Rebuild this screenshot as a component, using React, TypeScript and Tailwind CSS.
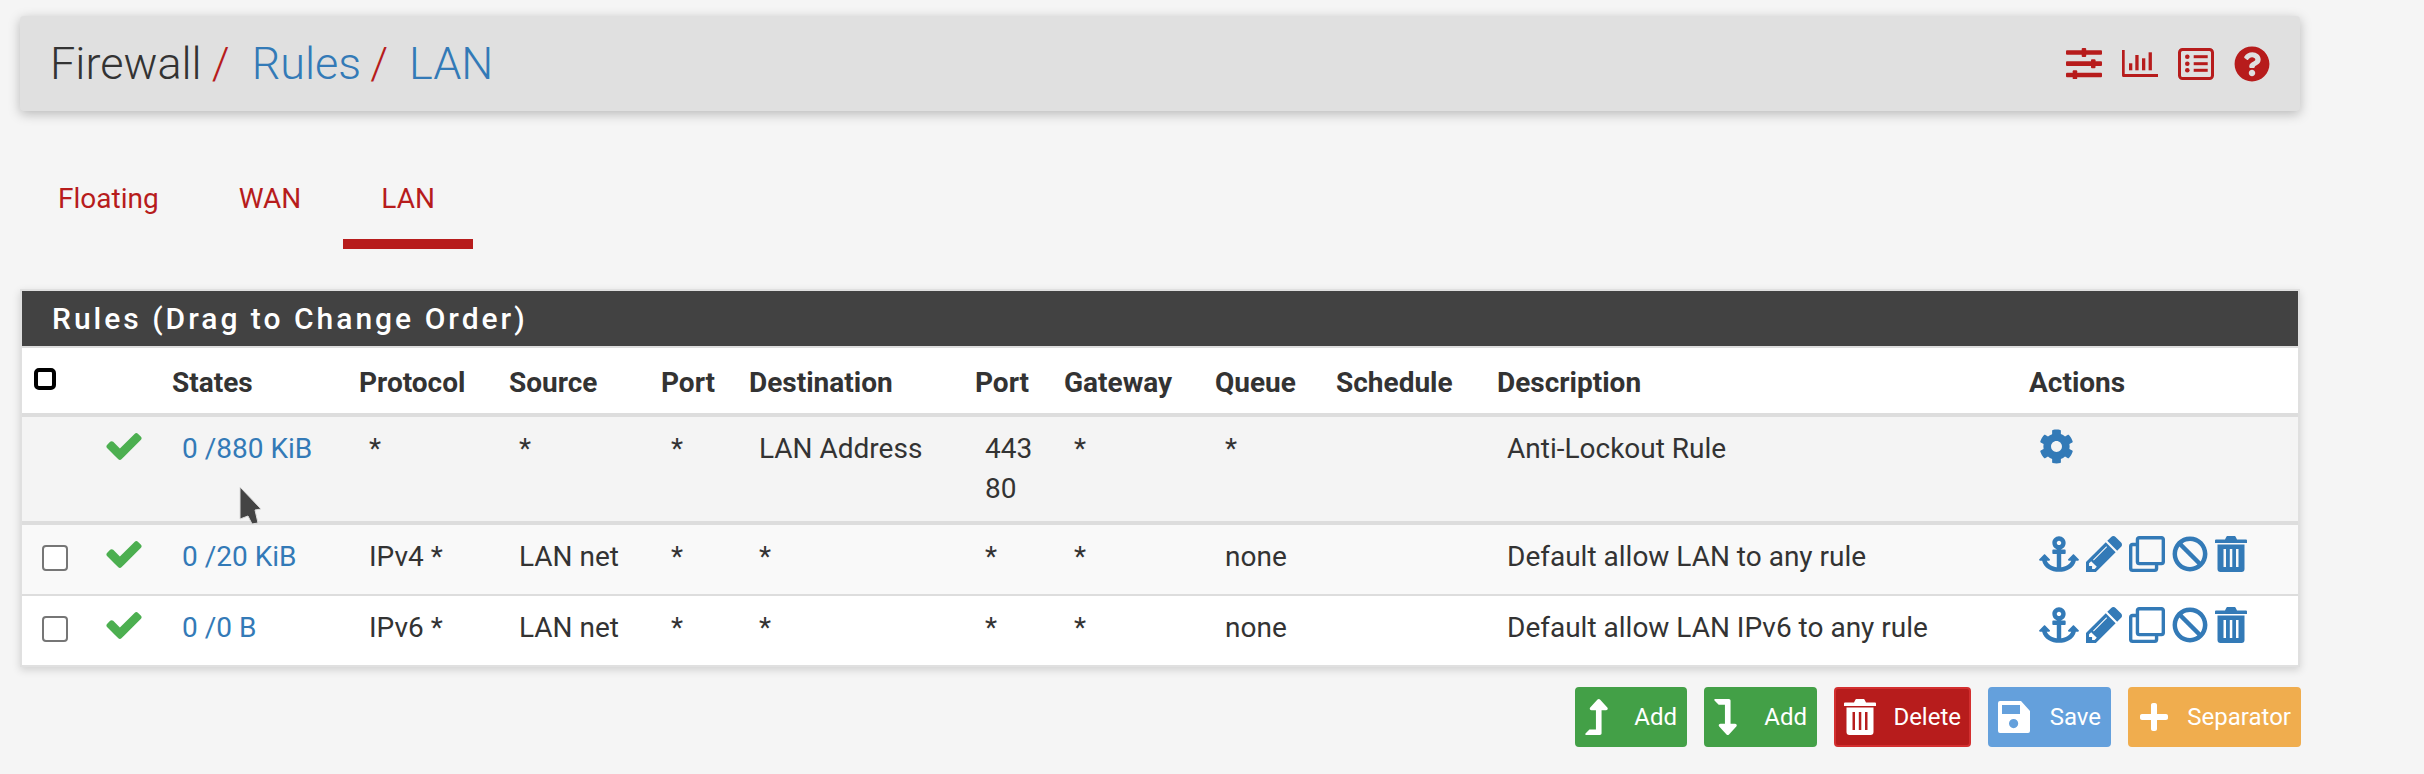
import React from "react";
import {
  FaAnchor,
  FaBan,
  FaCog,
  FaLevelDownAlt,
  FaLevelUpAlt,
  FaPlus,
  FaQuestionCircle,
  FaRegClone,
} from "react-icons/fa";

const columns = [
  { label: "", width: "w-[70px]" },
  { label: "", width: "w-[80px]" },
  { label: "States", width: "w-[187px]" },
  { label: "Protocol", width: "w-[150px]" },
  { label: "Source", width: "w-[152px]" },
  { label: "Port", width: "w-[88px]" },
  { label: "Destination", width: "w-[226px]" },
  { label: "Port", width: "w-[89px]" },
  { label: "Gateway", width: "w-[151px]" },
  { label: "Queue", width: "w-[121px]" },
  { label: "Schedule", width: "w-[161px]" },
  { label: "Description", width: "w-[532px]" },
  { label: "Actions", width: "w-[269px]" },
];

const rules = [
  { states: "0 /880 KiB", proto: "*", source: "*", dest: "LAN Address", port: ["443", "80"], queue: "*", desc: "Anti-Lockout Rule", locked: true },
  { states: "0 /20 KiB", proto: "IPv4 *", source: "LAN net", dest: "*", port: ["*"], queue: "none", desc: "Default allow LAN to any rule", locked: false },
  { states: "0 /0 B", proto: "IPv6 *", source: "LAN net", dest: "*", port: ["*"], queue: "none", desc: "Default allow LAN IPv6 to any rule", locked: false },
];

function SlidersIcon() {
  return (
    <svg viewBox="0 0 36 31" className="h-[31px] w-[36px] fill-current">
      <rect y="2.300" width="36" height="4.500" rx="1" />
      <rect x="15.700" width="4.500" height="9" rx="1" />
      <rect y="13.300" width="36" height="4.700" rx="1" />
      <rect x="25" y="11.300" width="4.500" height="9" rx="1" />
      <rect y="24.700" width="36" height="4.600" rx="1" />
      <rect x="6.700" y="22.300" width="4.500" height="9" rx="1" />
    </svg>
  );
}

function ChartIcon() {
  return (
    <svg viewBox="0 0 36 28" className="h-[28px] w-[36px] fill-current">
      <path d="M0 0h2.700v24H36v3H1.500A1.500 1.500 0 0 1 0 25.500z" />
      <rect x="7" y="13.300" width="3.300" height="7" />
      <rect x="13.300" y="5" width="3.300" height="15.300" />
      <rect x="20" y="8.300" width="3.300" height="12" />
      <rect x="26.600" y="2.300" width="3.300" height="18" />
    </svg>
  );
}

function ListIcon() {
  return (
    <svg viewBox="0 0 36 32" className="h-[32px] w-[36px] fill-current">
      <rect x="1.500" y="1.500" width="33" height="29" rx="3" fill="none" stroke="currentColor" strokeWidth="3" />
      <circle cx="9.300" cy="8.700" r="2.300" />
      <circle cx="9.300" cy="15.700" r="2.300" />
      <circle cx="9.300" cy="22.300" r="2.300" />
      <rect x="15.700" y="7.200" width="14" height="3" />
      <rect x="15.700" y="14.200" width="14" height="3" />
      <rect x="15.700" y="20.800" width="14" height="3" />
    </svg>
  );
}

function CheckIcon() {
  return (
    <svg viewBox="121 334 1550 1188" className="h-[27px] w-[36px] fill-current">
      <path d="M1671 566q0 40-28 68l-724 724-136 136q-28 28-68 28t-68-28l-136-136-362-362q-28-28-28-68t28-68l136-136q28-28 68-28t68 28l294 295 656-657q28-28 68-28t68 28l136 136q28 28 28 68z" />
    </svg>
  );
}

function PencilIcon() {
  return (
    <svg viewBox="128 149 1515 1515" className="h-[36px] w-[36px] fill-current">
      <path d="M491 1536l91-91-235-235-91 91v107h128v128h107zm523-928q0-22-22-22-10 0-17 7l-542 542q-7 7-7 17 0 22 22 22 10 0 17-7l542-542q7-7 7-17zm-54-192l416 416-832 832h-416v-416zm683 96q0 53-37 90l-166 166-416-416 166-165q36-38 90-38 53 0 91 38l235 234q37 39 37 91z" />
    </svg>
  );
}

function TrashIcon({ className }: { className: string }) {
  return (
    <svg viewBox="0 0 32 36" className={`fill-current ${className}`}>
      <path
        fillRule="evenodd"
        d="M10 3.500 11.500.500A1 1 0 0 1 12.400 0h7.200a1 1 0 0 1 .9.500L22 3.500h9a1 1 0 0 1 1 1V7H0V4.500a1 1 0 0 1 1-1zM2.500 8.500h27V33a3 3 0 0 1-3 3h-21a3 3 0 0 1-3-3zM8.500 13v18h2.500V13zM14.800 13v18h2.500V13zM21 13v18h2.500V13z"
      />
    </svg>
  );
}

function SaveIcon() {
  return (
    <svg viewBox="0 0 32 32" className="h-[32px] w-[32px] fill-current">
      <path
        fillRule="evenodd"
        d="M2 0H23l9 10V30a2 2 0 0 1-2 2H2a2 2 0 0 1-2-2V2a2 2 0 0 1 2-2zM4 4v9H22V4zM20.200 22.600a4.600 4.600 0 1 0-9.200 0 4.600 4.600 0 1 0 9.200 0z"
      />
    </svg>
  );
}

function ActionBtn({ color, icon, label, className }: { color: string; icon: React.ReactNode; label: string; className: string }) {
  return (
    <button className={`flex h-[60px] items-center justify-between rounded-[4px] border-2 pr-[8px] pl-[8px] text-[24px] text-white ${color} ${className}`}>
      {icon}
      <span>{label}</span>
    </button>
  );
}

export default function App() {
  return (
    <div className="relative min-h-[774px] w-[2424px] overflow-hidden bg-[#f5f5f5] pt-[16px] pl-[20px] font-['Roboto',sans-serif] text-[#333]">
      {/* breadcrumb bar */}
      <div className="flex h-[95px] w-[2280px] items-center justify-between rounded-[4px] bg-[#e0e0e0] pr-[30px] pl-[30px] shadow-[0_3px_12px_rgba(0,0,0,0.25)]">
        <h1 className="flex text-[45px] font-light">
          <span>Firewall</span>
          <span className="ml-[10px] text-[#b71c1c]">/</span>
          <span className="ml-[22px] text-[#337ab7]">Rules</span>
          <span className="ml-[9px] text-[#b71c1c]">/</span>
          <span className="ml-[21px] text-[#337ab7]">LAN</span>
        </h1>
        <div className="flex items-center gap-[20px] text-[#b71c1c]">
          <SlidersIcon />
          <ChartIcon />
          <ListIcon />
          <FaQuestionCircle className="h-[36px] w-[36px]" />
        </div>
      </div>

      {/* interface tabs */}
      <nav className="mt-[37px] flex text-[28px] leading-[40px] text-[#b71c1c]">
        <a className="h-[101px] pt-[31px] pl-[38px]">Floating</a>
        <a className="h-[101px] pt-[31px] pl-[80px]">WAN</a>
        <a className="ml-[42px] h-[101px] w-[130px] border-b-[10px] border-[#b71c1c] pt-[31px] text-center">LAN</a>
      </nav>

      {/* rules panel */}
      <div className="mt-[40px] w-[2280px] border-2 border-[#e0e0e0] bg-white shadow-[0_3px_8px_rgba(0,0,0,0.15)]">
        <h2 className="flex h-[57px] items-center border-b-2 border-[#ddd] bg-[#424242] pl-[30px] text-[30px] font-medium tracking-[3px] text-white">Rules (Drag to Change Order)</h2>
        <table className="w-full table-fixed border-separate border-spacing-0 text-[28px] leading-[40px]">
          <colgroup>
            {columns.map((c, i) => (
              <col key={i} className={c.width} />
            ))}
          </colgroup>
          <thead>
            <tr className="h-[69px]">
              {columns.map((c, i) => (
                <th key={i} className="border-b-[4px] border-[#ddd] p-0 pt-[4px] text-left align-middle font-bold">
                  {i === 0 ? <input type="checkbox" className="mb-[8px] ml-[12px] block h-[22px] w-[22px] appearance-none rounded-[5px] border-[4px] border-black bg-white" /> : c.label}
                </th>
              ))}
            </tr>
          </thead>
          <tbody>
            {rules.map((r, i) => {
              const cell = `${i === 0 ? "border-b-[4px] border-[#ddd] bg-[#f4f4f4]" : i === 1 ? "border-b-[2px] border-[#ddd] bg-[#f9f9f9]" : "bg-white"} align-top`;
              const text = `${cell} pt-[12px] pl-[10px]`;
              return (
                <tr key={i} className={i === 0 ? "h-[108px]" : i === 1 ? "h-[71px]" : "h-[69px]"}>
                  <td className={`${cell} pt-[20px] pl-[20px]`}>
                    {!r.locked && <input type="checkbox" className="block h-[26px] w-[26px] appearance-none rounded-[4px] border-2 border-[#767676] bg-white" />}
                  </td>
                  <td className={`${cell} pt-[16px] pl-[14px] text-[#4caf50]`}>
                    <CheckIcon />
                  </td>
                  <td className={`${text} text-[#337ab7]`}>{r.states}</td>
                  <td className={text}>{r.proto}</td>
                  <td className={text}>{r.source}</td>
                  <td className={text}>*</td>
                  <td className={text}>{r.dest}</td>
                  <td className={text}>
                    {r.port.map((p) => (
                      <div key={p}>{p}</div>
                    ))}
                  </td>
                  <td className={text}>*</td>
                  <td className={text}>{r.queue}</td>
                  <td className={cell} />
                  <td className={text}>{r.desc}</td>
                  <td className={`${text} text-[#337ab7]`}>
                    {r.locked ? (
                      <FaCog className="h-[35px] w-[35px]" />
                    ) : (
                      <div className="-mt-[1px] flex items-center gap-[7px]">
                        <FaAnchor className="h-[36px] w-[40px]" />
                        <PencilIcon />
                        <FaRegClone className="h-[36px] w-[36px]" />
                        <FaBan className="h-[36px] w-[36px]" />
                        <TrashIcon className="h-[36px] w-[32px]" />
                      </div>
                    )}
                  </td>
                </tr>
              );
            })}
          </tbody>
        </table>
      </div>

      {/* bottom buttons */}
      <div className="mt-[20px] flex w-[2281px] justify-end gap-[17px]">
        <ActionBtn color="border-[#43a047] bg-[#43a047]" className="w-[112px]" icon={<FaLevelUpAlt className="h-[36px] w-[23px]" />} label="Add" />
        <ActionBtn color="border-[#43a047] bg-[#43a047]" className="w-[113px]" icon={<FaLevelDownAlt className="h-[36px] w-[23px]" />} label="Add" />
        <ActionBtn color="border-[#d32f2f] bg-[#b71c1c]" className="w-[137px]" icon={<TrashIcon className="h-[36px] w-[32px]" />} label="Delete" />
        <ActionBtn color="border-[#64a0dc] bg-[#64a0dc]" className="w-[123px]" icon={<SaveIcon />} label="Save" />
        <ActionBtn color="border-[#f0ad4e] bg-[#f0ad4e]" className="w-[173px]" icon={<FaPlus className="h-[32px] w-[32px]" />} label="Separator" />
      </div>

      {/* mouse pointer caught in the screenshot */}
      <svg viewBox="0 0 24 40" className="absolute top-[486px] left-[239px] h-[40px] w-[24px]">
        <path d="M1 1 22 23 16 24 19 37 13 38 9 30 1 33z" fill="#444" stroke="#ddd" strokeWidth="1" />
      </svg>
    </div>
  );
}
